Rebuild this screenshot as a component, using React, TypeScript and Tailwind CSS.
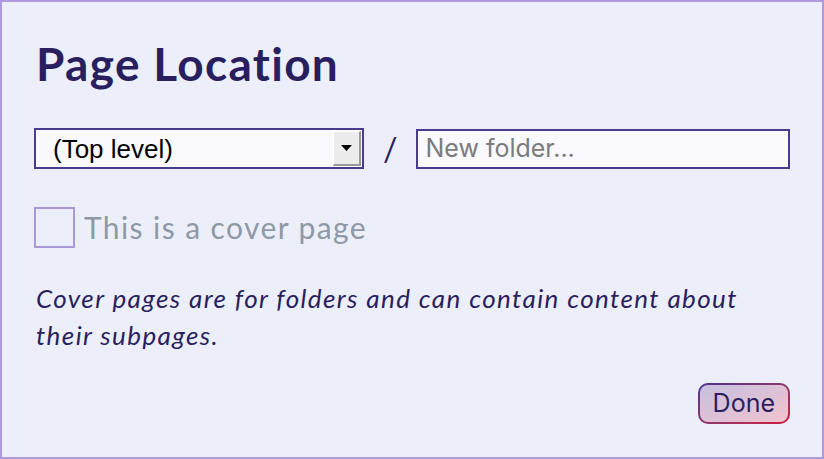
import React from 'react';

export default function App() {
  return (
    <div className="h-[459px] w-[824px] border-2 border-[#ad9ade] bg-[#eceffa] px-[32px] pt-[34px]" style={{ fontFamily: 'Lato, "Noto Sans", sans-serif' }}>
      <h1 className="pl-[2px] text-[46px] font-bold leading-[56px] tracking-[1.3px] text-[#2a1f5e]">Page Location</h1>

      {/* Row: select / new folder */}
      <div className="mt-[36px] flex items-center">
        <div className="flex h-[41px] w-[330px] items-stretch border-2 border-[#4a3b8c] bg-[#f9f9fe]">
          <div className="flex flex-1 items-center pl-[17px] pt-[2px] text-[26px] text-black" style={{ fontFamily: '"Liberation Sans", Arial, sans-serif' }}>(Top level)</div>
          <div className="my-[1px] mr-[1px] flex w-[28px] items-center justify-center border-t border-l border-t-white border-l-white border-r-2 border-b-2 border-r-[#9a9a9a] border-b-[#9a9a9a] bg-[#ececec]">
            <svg width="11" height="6" viewBox="0 0 11 6"><path d="M0 0H11L5.5 6Z" fill="#000" /></svg>
          </div>
        </div>
        <span className="mx-[19px] text-[32px] leading-none text-[#2a1f5e]">/</span>
        <div className="flex h-[40px] flex-1 items-center border-2 border-[#4a3b8c] bg-[#f9f9fe] pl-[7px] text-[25px] text-[#7c7c7c]" style={{ fontFamily: 'Inter, "Liberation Sans", sans-serif' }}>
          New folder...
        </div>
      </div>

      {/* Checkbox */}
      <div className="mt-[36px] flex items-center">
        <div className="h-[41px] w-[41px] border-2 border-[#a998da]" />
        <span className="ml-[9px] text-[30px] tracking-[1.4px] text-[#8f99a6]">This is a cover page</span>
      </div>

      {/* Description */}
      <p className="mt-[30px] max-w-[740px] pl-[2px] text-[26px] italic leading-[37px] tracking-[1.4px] text-[#2a1f5e]">
        Cover pages are for folders and can contain content about their subpages.
      </p>

      {/* Done */}
      <div className="mt-[29px] flex justify-end">
        <div className="rounded-[10px] bg-linear-to-br from-[#4a2f8c] to-[#d0103c] p-[2px]">
          <button className="flex h-[37px] items-center rounded-[8px] bg-linear-to-br from-[#c6c0e0] to-[#f2c2cc] px-[13px] text-[25px] text-[#2a1f5e]" style={{ fontFamily: 'Inter, "Liberation Sans", sans-serif' }}>
            Done
          </button>
        </div>
      </div>
    </div>
  );
}
